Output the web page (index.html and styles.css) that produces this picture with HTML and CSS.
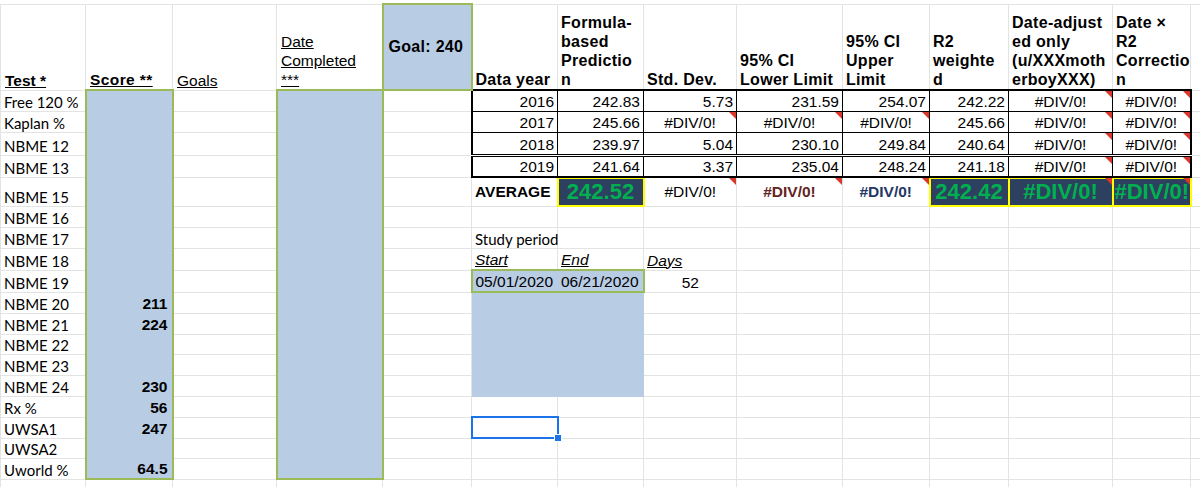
FILE: index.html
```html
<!DOCTYPE html>
<html lang="en">
<head>
  <meta charset="UTF-8">
  <title>Score Predictor</title>
  <link rel="stylesheet" href="styles.css">
</head>
<body>
  <table class="sheet">
    <colgroup>
      <col class="w85"><col class="w87"><col class="w104"><col class="w106"><col class="w89">
      <col class="w86"><col class="w86"><col class="w93"><col class="w106"><col class="w87">
      <col class="w79"><col class="w104"><col class="w78"><col class="w60">
    </colgroup>
    <tr class="h86">
      <td class="hu b">Test *</td>
      <td class="hu b sp">Score **</td>
      <td class="hu">Goals</td>
      <td class="hu">Date<br>Completed<br>***</td>
      <td class="goal">Goal: 240</td>
      <td class="hd">Data year</td>
      <td class="hd">Formula-<br>based<br>Predictio<br>n</td>
      <td class="hd">Std. Dev.</td>
      <td class="hd">95% CI<br>Lower Limit</td>
      <td class="hd">95% CI<br>Upper<br>Limit</td>
      <td class="hd">R2<br>weighte<br>d</td>
      <td class="hd">Date-adjust<br>ed only<br>(u/XXXmoth<br>erboyXXX)</td>
      <td class="hd">Date ×<br>R2<br>Correctio<br>n</td>
      <td></td>
    </tr>
    <tr class="h21">
      <td class="c">Free 120 %</td><td class="rng top"></td><td></td><td class="rng top"></td><td></td>
      <td class="tb tb-top tb-l num">2016</td><td class="tb tb-top num">242.83</td><td class="tb tb-top num">5.73</td>
      <td class="tb tb-top num">231.59</td><td class="tb tb-top num">254.07</td><td class="tb tb-top num">242.22</td>
      <td class="tb tb-top err tri">#DIV/0!</td><td class="tb tb-top tb-r err tri">#DIV/0!</td><td></td>
    </tr>
    <tr class="h21">
      <td class="c">Kaplan %</td><td class="rng"></td><td></td><td class="rng"></td><td></td>
      <td class="tb tb-l num">2017</td><td class="tb num">245.66</td><td class="tb err tri">#DIV/0!</td>
      <td class="tb err tri">#DIV/0!</td><td class="tb err tri">#DIV/0!</td><td class="tb num">245.66</td>
      <td class="tb err tri">#DIV/0!</td><td class="tb tb-r err tri">#DIV/0!</td><td></td>
    </tr>
    <tr class="h23">
      <td class="c">NBME 12</td><td class="rng"></td><td></td><td class="rng"></td><td></td>
      <td class="tb tb-dbl tb-l num">2018</td><td class="tb tb-dbl num">239.97</td><td class="tb tb-dbl num">5.04</td>
      <td class="tb tb-dbl num">230.10</td><td class="tb tb-dbl num">249.84</td><td class="tb tb-dbl num">240.64</td>
      <td class="tb tb-dbl err tri">#DIV/0!</td><td class="tb tb-dbl tb-r err tri">#DIV/0!</td><td></td>
    </tr>
    <tr class="h22">
      <td class="c">NBME 13</td><td class="rng"></td><td></td><td class="rng"></td><td></td>
      <td class="tb tb-end tb-l num">2019</td><td class="tb tb-end num">241.64</td><td class="tb tb-end num">3.37</td>
      <td class="tb tb-end num">235.04</td><td class="tb tb-end num">248.24</td><td class="tb tb-end num">241.18</td>
      <td class="tb tb-end err tri">#DIV/0!</td><td class="tb tb-end tb-r err tri">#DIV/0!</td><td></td>
    </tr>
    <tr class="h29">
      <td class="c">NBME 15</td><td class="rng"></td><td></td><td class="rng"></td><td></td>
      <td class="mid b avg-label">AVERAGE</td><td class="avg">242.52</td><td class="mid err tri">#DIV/0!</td>
      <td class="mid err tri dred">#DIV/0!</td><td class="mid err tri dnavy">#DIV/0!</td><td class="avg">242.42</td>
      <td class="avg tri">#DIV/0!</td><td class="avg tri">#DIV/0!</td><td></td>
    </tr>
    <tr class="h21">
      <td class="c">NBME 16</td><td class="rng"></td><td></td><td class="rng"></td><td></td>
      <td></td><td></td><td></td><td></td><td></td><td></td><td></td><td></td><td></td>
    </tr>
    <tr class="h21">
      <td class="c">NBME 17</td><td class="rng"></td><td></td><td class="rng"></td><td></td>
      <td class="c">Study period</td><td></td><td></td><td></td><td></td><td></td><td></td><td></td><td></td>
    </tr>
    <tr class="h22">
      <td class="c">NBME 18</td><td class="rng"></td><td></td><td class="rng"></td><td></td>
      <td class="iu">Start</td><td class="iu">End</td><td class="iu">Days</td><td></td><td></td><td></td><td></td><td></td><td></td>
    </tr>
    <tr class="h22">
      <td class="c">NBME 19</td><td class="rng"></td><td></td><td class="rng"></td><td></td>
      <td class="dt dt-l">05/01/2020</td><td class="dt dt-r">06/21/2020</td><td class="err">52</td><td></td><td></td><td></td><td></td><td></td><td></td>
    </tr>
    <tr class="h21">
      <td class="c">NBME 20</td><td class="rng">211</td><td></td><td class="rng"></td><td></td>
      <td class="blk"></td><td class="blk"></td><td></td><td></td><td></td><td></td><td></td><td></td><td></td>
    </tr>
    <tr class="h21">
      <td class="c">NBME 21</td><td class="rng">224</td><td></td><td class="rng"></td><td></td>
      <td class="blk"></td><td class="blk"></td><td></td><td></td><td></td><td></td><td></td><td></td><td></td>
    </tr>
    <tr class="h20">
      <td class="c">NBME 22</td><td class="rng"></td><td></td><td class="rng"></td><td></td>
      <td class="blk"></td><td class="blk"></td><td></td><td></td><td></td><td></td><td></td><td></td><td></td>
    </tr>
    <tr class="h21">
      <td class="c">NBME 23</td><td class="rng"></td><td></td><td class="rng"></td><td></td>
      <td class="blk"></td><td class="blk"></td><td></td><td></td><td></td><td></td><td></td><td></td><td></td>
    </tr>
    <tr class="h21">
      <td class="c">NBME 24</td><td class="rng">230</td><td></td><td class="rng"></td><td></td>
      <td class="blk"></td><td class="blk"></td><td></td><td></td><td></td><td></td><td></td><td></td><td></td>
    </tr>
    <tr class="h21">
      <td class="c">Rx %</td><td class="rng">56</td><td></td><td class="rng"></td><td></td>
      <td></td><td></td><td></td><td></td><td></td><td></td><td></td><td></td><td></td>
    </tr>
    <tr class="h21">
      <td class="c">UWSA1</td><td class="rng">247</td><td></td><td class="rng"></td><td></td>
      <td class="sel"></td><td></td><td></td><td></td><td></td><td></td><td></td><td></td><td></td>
    </tr>
    <tr class="h20">
      <td class="c">UWSA2</td><td class="rng"></td><td></td><td class="rng"></td><td></td>
      <td></td><td></td><td></td><td></td><td></td><td></td><td></td><td></td><td></td>
    </tr>
    <tr class="h21">
      <td class="c">Uworld %</td><td class="rng bot">64.5</td><td></td><td class="rng bot"></td><td></td>
      <td></td><td></td><td></td><td></td><td></td><td></td><td></td><td></td><td></td>
    </tr>
    <tr class="h21">
      <td></td><td></td><td></td><td></td><td></td><td></td><td></td>
      <td></td><td></td><td></td><td></td><td></td><td></td><td></td>
    </tr>
  </table>
</body>
</html>
```

FILE: styles.css
```css
html, body { margin: 0; overflow: hidden; background: #fff; }
body { font-family: "Liberation Sans", Arial, sans-serif; font-size: 15.5px; color: #000; padding-top: 3px; }

.sheet { border-collapse: collapse; table-layout: fixed; width: 1250px; }
.sheet td { border: 1px solid #e2e3e3; padding: 0 3px; vertical-align: bottom; line-height: 18px; white-space: nowrap; overflow: visible; }

.w60 { width: 60px; } .w78 { width: 78px; } .w79 { width: 79px; } .w85 { width: 85px; }
.w86 { width: 86px; } .w87 { width: 87px; } .w89 { width: 89px; } .w93 { width: 93px; }
.w104 { width: 104px; } .w106 { width: 106px; }

.h20 { height: 20px; } .h21 { height: 21px; } .h22 { height: 22px; } .h23 { height: 23px; }
.h29 { height: 29px; } .h86 { height: 86px; }

.b { font-weight: bold; }
.c { font-family: Lato, "Liberation Sans", sans-serif; font-size: 15px; padding-left: 4px; }

/* header row */
.sheet td.hu { text-decoration: underline; line-height: 19px; padding-left: 4px; }
.sp { letter-spacing: .4px; }
.sheet td.hd { font-weight: bold; font-size: 16px; letter-spacing: .3px; line-height: 19px; }
.sheet td.goal { background: #b8cce4; border: 2px solid #9bbb59; font-weight: bold; font-size: 16px; letter-spacing: .3px; vertical-align: middle; padding-left: 5px; }

/* blue input ranges */
.sheet td.rng { background: #b8cce4; border: 1px solid #b8cce4; border-left: 2px solid #9bbb59; border-right: 2px solid #9bbb59; text-align: right; font-weight: bold; padding-right: 4px; }
.sheet td.rng.top { border-top: 2px solid #9bbb59; }
.sheet td.rng.bot { border-bottom: 2px solid #9bbb59; }
.sheet td.blk { background: #b8cce4; border-color: #b8cce4; }
.sheet td.dt { background: #b8cce4; border: 2px solid #9bbb59; }
.sheet td.dt-l { border-right: 1px solid #b8cce4; }
.sheet td.dt-r { border-left: 1px solid #b8cce4; }

/* prediction table */
.sheet td.tb { border: 1px solid #000; }
.sheet td.tb-top { border-top: 2px solid #000; }
.sheet td.tb-l { border-left: 2px solid #000; }
.sheet td.tb-r { border-right: 2px solid #000; }
.sheet td.tb-dbl { border-bottom: 3px double #000; }
.sheet td.tb-end { border-bottom: 2px solid #000; }

.num { text-align: right; }
.err { text-align: center; }
.sheet td.mid { vertical-align: middle; }
.avg-label { padding-left: 5px; }
.dred { color: #632523; font-weight: bold; }
.dnavy { color: #1f3864; font-weight: bold; }

.sheet td.avg { background: #2d405f; color: #00b050; font-weight: bold; font-size: 22px; text-align: center; vertical-align: middle; border: 2px solid #ff0; box-shadow: inset 0 1px 0 #ff0; padding: 0 1px; }

.tri { position: relative; }
.tri::after { content: ""; position: absolute; top: 0; right: 0; border-style: solid; border-width: 0 7px 7px 0; border-color: transparent #d8392b transparent transparent; }

.iu { font-style: italic; text-decoration: underline; }

.sheet td.sel { border: 2px solid #1a73e8; position: relative; }
.sel::after { content: ""; position: absolute; right: -5px; bottom: -5px; width: 6px; height: 6px; background: #1a73e8; border: 1px solid #fff; }
```
